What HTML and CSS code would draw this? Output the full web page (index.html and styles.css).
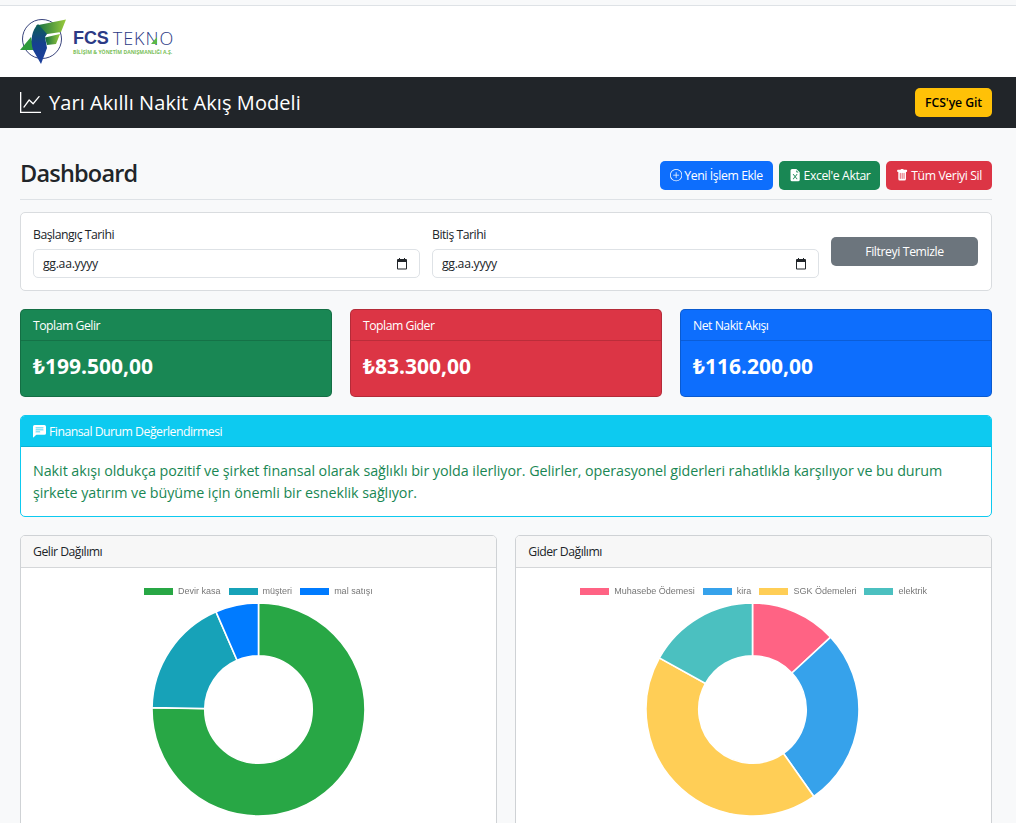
FILE: index.html
```html
<!DOCTYPE html>
<html lang="tr">
<head>
<meta charset="utf-8">
<title>Yarı Akıllı Nakit Akış Modeli</title>
<link rel="stylesheet" href="styles.css">
</head>
<body>
<header class="logo-bar">
  <div class="logo">
    <svg class="logo-mark" viewBox="16 14 52 54" aria-hidden="true">
      <defs>
        <linearGradient id="lg1" x1="0" y1="0" x2="1" y2="0"><stop offset="0" stop-color="#0f6b3f"/><stop offset="1" stop-color="#9acb3c"/></linearGradient>
        <linearGradient id="lg2" x1="0" y1="0" x2="0" y2="1"><stop offset="0" stop-color="#0d5f55"/><stop offset=".5" stop-color="#15408f"/><stop offset="1" stop-color="#1d3f9c"/></linearGradient>
      </defs>
      <circle cx="42" cy="39" r="19.500" fill="none" stroke="#39447c" stroke-width="1"/>
      <path d="M20 50 L31 37 L34 50 Z" fill="#2f9a3c"/>
      <path d="M36 25.500 L66 19.500 L61 32 L44 34.500 Z" fill="url(#lg1)"/>
      <path d="M45 37.500 L60 34 L56 44 L47 45 Z" fill="url(#lg1)"/>
      <path d="M38 24 C32 30 30 40 33 50 L41 64 L47 48 L45 37 L47 34 Z" fill="url(#lg2)"/>
    </svg>
    <div class="logo-text">
      <div class="logo-name"><b>FCS</b><span>TEKNO</span><svg class="logo-tick" viewBox="0 0 6 7" aria-hidden="true"><path d="M0 7 L6 0 V7 Z"/></svg></div>
      <div class="logo-sub">BİLİŞİM &amp; YÖNETİM DANIŞMANLIĞI A.Ş.</div>
    </div>
  </div>
</header>

<nav class="navbar">
  <div class="brand">
    <svg class="brand-icon" viewBox="0 0 16 16" aria-hidden="true"><path fill-rule="evenodd" d="M0 0h1v15h15v1H0V0Zm14.817 3.113a.5.5 0 0 1 .07.704l-4.5 5.5a.5.5 0 0 1-.74.037L7.06 6.767l-3.656 5.027a.5.5 0 0 1-.808-.588l4-5.5a.5.5 0 0 1 .758-.06l2.609 2.61 4.15-5.073a.5.5 0 0 1 .704-.07Z"/></svg>
    <span>Yarı Akıllı Nakit Akış Modeli</span>
  </div>
  <a class="btn btn-warning">FCS'ye Git</a>
</nav>

<main class="main">
  <div class="page-head">
    <h1>Dashboard</h1>
    <div class="actions">
      <a class="btn btn-primary"><svg viewBox="0 0 16 16" aria-hidden="true"><path d="M8 15A7 7 0 1 1 8 1a7 7 0 0 1 0 14zm0 1A8 8 0 1 0 8 0a8 8 0 0 0 0 16z"/><path d="M8 4a.5.5 0 0 1 .5.5v3h3a.5.5 0 0 1 0 1h-3v3a.5.5 0 0 1-1 0v-3h-3a.5.5 0 0 1 0-1h3v-3A.5.5 0 0 1 8 4z"/></svg>Yeni İşlem Ekle</a>
      <a class="btn btn-success"><svg viewBox="0 0 16 16" aria-hidden="true"><path d="M9.293 0H4a2 2 0 0 0-2 2v12a2 2 0 0 0 2 2h8a2 2 0 0 0 2-2V4.707A1 1 0 0 0 13.707 4L10 .293A1 1 0 0 0 9.293 0zM9.5 3.5v-2l3 3h-2a1 1 0 0 1-1-1zM5.884 6.68 8 9.219l2.116-2.54a.5.5 0 1 1 .768.641L8.651 10l2.233 2.68a.5.5 0 0 1-.768.64L8 10.781l-2.116 2.54a.5.5 0 0 1-.768-.641L7.349 10 5.116 7.32a.5.5 0 1 1 .768-.64z"/></svg>Excel'e Aktar</a>
      <a class="btn btn-danger"><svg viewBox="0 0 16 16" aria-hidden="true"><path d="M2.5 1a1 1 0 0 0-1 1v1a1 1 0 0 0 1 1H3v9a2 2 0 0 0 2 2h6a2 2 0 0 0 2-2V4h.5a1 1 0 0 0 1-1V2a1 1 0 0 0-1-1H10a1 1 0 0 0-1-1H7a1 1 0 0 0-1 1H2.5zm3 4a.5.5 0 0 1 .5.5v7a.5.5 0 0 1-1 0v-7a.5.5 0 0 1 .5-.5zM8 5a.5.5 0 0 1 .5.5v7a.5.5 0 0 1-1 0v-7A.5.5 0 0 1 8 5zm3 .5v7a.5.5 0 0 1-1 0v-7a.5.5 0 0 1 1 0z"/></svg>Tüm Veriyi Sil</a>
    </div>
  </div>

  <section class="card filter">
    <div class="field">
      <label>Başlangıç Tarihi</label>
      <div class="date-input"><span>gg.aa.yyyy</span><svg viewBox="0 0 12 12" aria-hidden="true"><path d="M3 0h1v1h4V0h1v1h1a1 1 0 0 1 1 1v8.500a1 1 0 0 1-1 1H2a1 1 0 0 1-1-1V2a1 1 0 0 1 1-1h1V0Zm-1 4v6.500h8V4H2Z"/></svg></div>
    </div>
    <div class="field">
      <label>Bitiş Tarihi</label>
      <div class="date-input"><span>gg.aa.yyyy</span><svg viewBox="0 0 12 12" aria-hidden="true"><path d="M3 0h1v1h4V0h1v1h1a1 1 0 0 1 1 1v8.500a1 1 0 0 1-1 1H2a1 1 0 0 1-1-1V2a1 1 0 0 1 1-1h1V0Zm-1 4v6.500h8V4H2Z"/></svg></div>
    </div>
    <a class="btn btn-secondary">Filtreyi Temizle</a>
  </section>

  <section class="stats">
    <div class="stat stat-green"><div class="stat-head">Toplam Gelir</div><div class="stat-value">₺199.500,00</div></div>
    <div class="stat stat-red"><div class="stat-head">Toplam Gider</div><div class="stat-value">₺83.300,00</div></div>
    <div class="stat stat-blue"><div class="stat-head">Net Nakit Akışı</div><div class="stat-value">₺116.200,00</div></div>
  </section>

  <section class="info">
    <div class="info-head"><svg viewBox="0 0 16 16" aria-hidden="true"><path d="M0 2a2 2 0 0 1 2-2h12a2 2 0 0 1 2 2v8a2 2 0 0 1-2 2H4.414a1 1 0 0 0-.707.293L.854 15.146A.5.5 0 0 1 0 14.793V2zm3.500 1a.5.5 0 0 0 0 1h9a.5.5 0 0 0 0-1h-9zm0 2.500a.5.5 0 0 0 0 1h9a.5.5 0 0 0 0-1h-9zm0 2.500a.5.5 0 0 0 0 1h5a.5.5 0 0 0 0-1h-5z"/></svg>Finansal Durum Değerlendirmesi</div>
    <p class="info-body">Nakit akışı oldukça pozitif ve şirket finansal olarak sağlıklı bir yolda ilerliyor. Gelirler, operasyonel giderleri rahatlıkla karşılıyor ve bu durum şirkete yatırım ve büyüme için önemli bir esneklik sağlıyor.</p>
  </section>

  <section class="charts">
    <div class="chart-card">
      <div class="chart-head">Gelir Dağılımı</div>
      <div class="chart-body">
        <div class="legend">
          <span class="key"><i class="swatch c-green"></i>Devir kasa</span>
          <span class="key"><i class="swatch c-teal"></i>müşteri</span>
          <span class="key"><i class="swatch c-blue"></i>mal satışı</span>
        </div>
        <svg class="donut" viewBox="-108 -108 216 216" aria-hidden="true">
          <path fill="#28a745" d="M0 -106A106 106 0 1 1 -105.98 -1.85L-53.49 -.93A53.500 53.500 0 1 0 0 -53.500Z"/>
          <path fill="#17a2b8" d="M-105.98 -1.85A106 106 0 0 1 -42.26 -97.21L-21.33 -49.06A53.500 53.500 0 0 0 -53.49 -.93Z"/>
          <path fill="#007bff" d="M-42.26 -97.21A106 106 0 0 1 0 -106L0 -53.500A53.500 53.500 0 0 0 -21.33 -49.06Z"/>
        </svg>
      </div>
    </div>
    <div class="chart-card">
      <div class="chart-head">Gider Dağılımı</div>
      <div class="chart-body">
        <div class="legend">
          <span class="key"><i class="swatch c-pink"></i>Muhasebe Ödemesi</span>
          <span class="key"><i class="swatch c-sky"></i>kira</span>
          <span class="key"><i class="swatch c-yellow"></i>SGK Ödemeleri</span>
          <span class="key"><i class="swatch c-aqua"></i>elektrik</span>
        </div>
        <svg class="donut donut-shift" viewBox="-108 -108 216 216" aria-hidden="true">
          <path fill="#ff6384" d="M0 -106A106 106 0 0 1 77.77 -72.02L39.25 -36.35A53.500 53.500 0 0 0 0 -53.500Z"/>
          <path fill="#36a2eb" d="M77.77 -72.02A106 106 0 0 1 61.1 86.62L30.84 43.72A53.500 53.500 0 0 0 39.25 -36.35Z"/>
          <path fill="#ffce56" d="M61.1 86.62A106 106 0 0 1 -92.71 -51.39L-46.79 -25.94A53.500 53.500 0 0 0 30.84 43.72Z"/>
          <path fill="#4bc0c0" d="M-92.71 -51.39A106 106 0 0 1 0 -106L0 -53.500A53.500 53.500 0 0 0 -46.79 -25.94Z"/>
        </svg>
      </div>
    </div>
  </section>
</main>
</body>
</html>
```
FILE: styles.css
```css
* { box-sizing: border-box; }
html, body { margin: 0; height: 823px; overflow: hidden; }
body {
  background: #f8f9fa;
  color: #212529;
  font-family: "Open Sans", "Noto Sans", "Liberation Sans", sans-serif;
  font-size: 12.25px;
  letter-spacing: -0.5px;
}

.logo-bar {
  height: 72px;
  margin-top: 5px;
  background: #fff;
  border-top: 1px solid #dee2e6;
  padding: 8px 16px 0;
}
.logo { display: flex; align-items: flex-start; gap: 5px; }
.logo-mark { width: 52px; height: 54px; flex: none; }
.logo-text { padding-top: 14px; }
.logo-name {
  position: relative;
  display: flex;
  gap: 4px;
  height: 21px;
  align-items: center;
  font-size: 18px;
  line-height: 21px;
  color: #2c3a85;
  white-space: nowrap;
}
.logo-name b { font-family: "Liberation Sans", sans-serif; font-weight: 700; letter-spacing: -0.1px; }
.logo-name span { font-weight: 300; letter-spacing: 1px; }
.logo-tick { position: absolute; left: 78px; top: 9px; width: 6px; height: 7px; fill: #5cb848; }
.logo-sub { font-size: 5.1px; line-height: 6px; font-weight: 700; letter-spacing: 0; color: #7cbf5a; white-space: nowrap; }

.navbar {
  height: 51px;
  background: #212529;
  padding: 0 24px 0 20px;
  display: flex;
  align-items: center;
  justify-content: space-between;
}
.brand { display: flex; align-items: center; gap: 8px; color: #fff; font-size: 20px; letter-spacing: 0.07px; }
.brand-icon { width: 21px; height: 21px; fill: #fff; }

.btn {
  display: inline-flex;
  align-items: center;
  justify-content: center;
  height: 29px;
  padding: 0 10px;
  border-radius: 5px;
  color: #fff;
  font-size: 12.25px;
  letter-spacing: -0.4px;
  white-space: nowrap;
}
.btn svg { width: 12.25px; height: 12.25px; fill: currentColor; margin-right: 2.5px; }
.btn-warning { background: #ffc107; color: #000; font-weight: 600; letter-spacing: -0.1px; }
.btn-primary { background: #0d6efd; }
.btn-success { background: #198754; }
.btn-danger { background: #dc3545; }
.btn-secondary { background: #6c757d; }

.main { padding: 0 24px 0 20px; }

.page-head {
  height: 72px;
  padding-top: 32px;
  border-bottom: 1px solid #dee2e6;
  display: flex;
  justify-content: space-between;
  align-items: flex-start;
}
.page-head h1 { margin: 0; font-size: 23.5px; line-height: 26px; font-weight: 600; letter-spacing: -0.8px; }
.actions { display: flex; gap: 6px; padding-top: 1px; }

.card {
  background: #fff;
  border: 1px solid #d9dcdf;
  border-radius: 5px;
}
.filter {
  margin-top: 12px;
  height: 79px;
  padding: 12px 13px 12px 12px;
  display: flex;
  align-items: flex-end;
  gap: 12px;
}
.field { flex: 1; min-width: 0; }
.field label { display: block; line-height: 18px; margin-bottom: 5px; }
.date-input {
  height: 29px;
  background: #fff;
  border: 1px solid #dee2e6;
  border-radius: 5px;
  padding: 0 9px;
  display: flex;
  align-items: center;
  justify-content: space-between;
  letter-spacing: -0.3px;
}
.date-input svg { width: 12px; height: 12px; fill: #212529; margin-right: 2px; }
.filter .btn { width: 147px; margin-bottom: 12px; }

.stats { margin-top: 18px; display: grid; grid-template-columns: repeat(3, 1fr); gap: 18px; }
.stat {
  height: 88px;
  border: 1px solid rgba(0,0,0,.18);
  border-radius: 5px;
  color: #fff;
}
.stat-green { background: #198754; }
.stat-red { background: #dc3545; }
.stat-blue { background: #0d6efd; }
.stat-head {
  height: 31px;
  line-height: 32px;
  padding: 0 12px;
  border-bottom: 1px solid rgba(0,0,0,.15);
}
.stat-value { padding: 12px 12px 0; font-size: 21px; line-height: 26px; font-weight: 700; letter-spacing: 0; }

.info {
  margin-top: 18px;
  height: 102px;
  background: #fff;
  border: 1px solid #0dcaf0;
  border-radius: 5px;
  overflow: hidden;
}
.info-head {
  height: 31px;
  background: #0dcaf0;
  border-bottom: 1px solid rgba(0,0,0,.12);
  color: #fff;
  padding: 0 12px;
  display: flex;
  align-items: center;
  gap: 3px;
}
.info-head svg { width: 13px; height: 13px; fill: #fff; }
.info-body {
  margin: 0;
  padding: 13px 12px 0;
  color: #198754;
  font-size: 14.3px;
  line-height: 22px;
  letter-spacing: -0.05px;
}

.charts { margin-top: 18px; display: grid; grid-template-columns: 1fr 1fr; gap: 18.5px; }
.chart-card {
  height: 400px;
  background: #fff;
  border: 1px solid #cfd2d5;
  border-radius: 5px;
  overflow: hidden;
}
.chart-head {
  height: 32px;
  line-height: 32px;
  padding: 0 12px;
  background: #f7f7f7;
  border-bottom: 1px solid #d5d7d9;
}
.chart-body { display: flex; flex-direction: column; align-items: center; padding-top: 17px; }
.legend {
  display: flex;
  gap: 8px;
  height: 12px;
  align-items: center;
  color: #777;
  font-family: "Liberation Sans", sans-serif;
  font-size: 9px;
  letter-spacing: 0;
  filter: blur(0.65px);
}
.key { display: inline-flex; align-items: center; gap: 5px; white-space: nowrap; }
.swatch { display: block; width: 29px; height: 7px; }
.c-green { background: #28a745; }
.c-teal { background: #17a2b8; }
.c-blue { background: #007bff; }
.c-pink { background: #ff6384; }
.c-sky { background: #36a2eb; }
.c-yellow { background: #ffce56; }
.c-aqua { background: #4bc0c0; }
.donut { display: block; width: 217px; height: 217px; margin-top: 4px; filter: blur(0.35px); }
.donut-shift { margin-right: 1.5px; }
.donut path { stroke: #fff; stroke-width: 1.6; }
```
